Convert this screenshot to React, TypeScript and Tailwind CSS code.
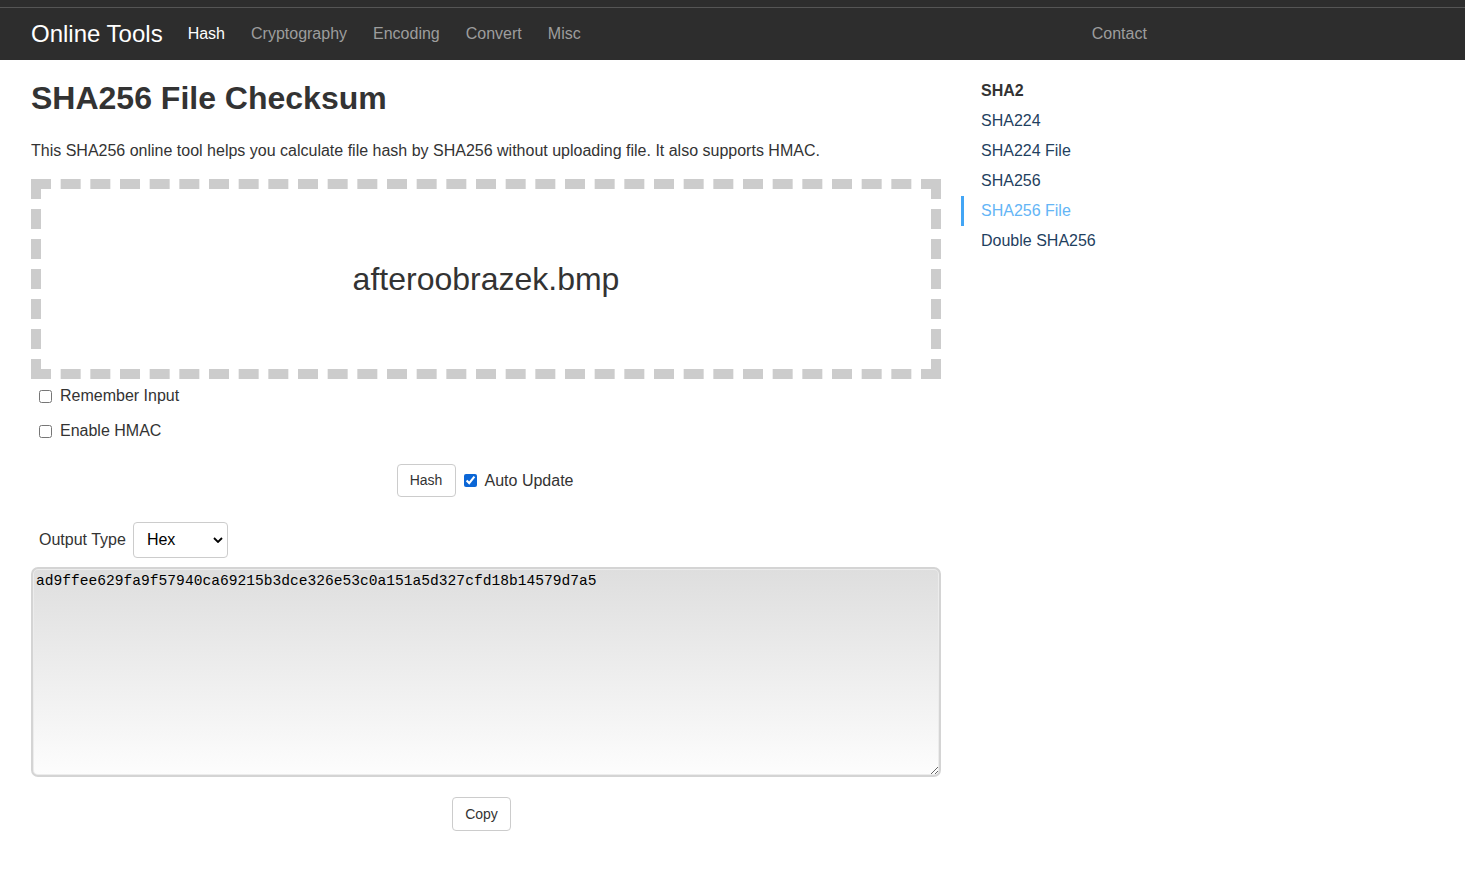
import { useState } from "react";

const NAV_ITEMS = ["Hash", "Cryptography", "Encoding", "Convert", "Misc"];
const SIDE_ITEMS = ["SHA224", "SHA224 File", "SHA256", "SHA256 File", "Double SHA256"];
const HASH = "ad9ffee629fa9f57940ca69215b3dce326e53c0a151a5d327cfd18b14579d7a5";

const App = () => {
  const [remember, setRemember] = useState(false);
  const [hmac, setHmac] = useState(false);
  const [auto, setAuto] = useState(true);

  return (
    <div
      className="min-h-screen bg-white text-[#333]"
      style={{ fontFamily: '"Liberation Sans", Arial, sans-serif' }}
    >
      <header className="bg-[#2d2d2d]">
        <div className="h-[7px]" />
        <nav className="h-[53px] border-t border-[#555] flex flex-row items-center pl-[31px]">
          <a href="#" className="text-white text-[24px] mr-[25px] leading-none">
            Online Tools
          </a>
          <ul className="flex flex-row items-center gap-[26px] text-[16px]">
            {NAV_ITEMS.map((item, i) => (
              <li key={item} className={i === 0 ? "text-white" : "text-[#9d9d9d]"}>
                {item}
              </li>
            ))}
          </ul>
          <span className="ml-[511px] text-[16px] text-[#9d9d9d]">Contact</span>
        </nav>
      </header>

      <div className="flex flex-row pl-[31px] gap-[20px]">
        <main className="w-[910px]">
          <h1 className="text-[32px] font-bold leading-none mt-[22px] mb-[27px]">
            SHA256 File Checksum
          </h1>
          <p className="text-[16px] leading-[20px] mb-[18px]">
            This SHA256 online tool helps you calculate file hash by SHA256 without uploading file.
            It also supports HMAC.
          </p>

          <div className="h-[200px] border-[10px] border-dashed border-[#ccc] flex items-center justify-center">
            <span className="text-[32px]">afteroobrazek.bmp</span>
          </div>

          <div className="pl-[8px] pt-[7px]">
            <label className="flex flex-row items-center h-[20px] text-[16px]">
              <input
                type="checkbox"
                checked={remember}
                onChange={(e) => setRemember(e.target.checked)}
                className="w-[13px] h-[13px] mr-[8px] ml-0"
              />
              Remember Input
            </label>
            <label className="flex flex-row items-center h-[20px] mt-[15px] text-[16px]">
              <input
                type="checkbox"
                checked={hmac}
                onChange={(e) => setHmac(e.target.checked)}
                className="w-[13px] h-[13px] mr-[8px] ml-0"
              />
              Enable HMAC
            </label>
          </div>

          <div className="flex flex-row justify-center items-center mt-[23px] pr-[2px]">
            <button
              type="button"
              className="w-[59px] h-[33px] border border-[#ccc] rounded-[4px] text-[14px] bg-white"
            >
              Hash
            </button>
            <label className="flex flex-row items-center ml-[8px] text-[16px]">
              <input
                type="checkbox"
                checked={auto}
                onChange={(e) => setAuto(e.target.checked)}
                className="w-[13px] h-[13px] mr-[8px] accent-[#0b66d6]"
              />
              Auto Update
            </label>
          </div>

          <div className="flex flex-row items-center mt-[25px] pl-[8px]">
            <span className="text-[16px] mr-[7px]">Output Type</span>
            <div className="relative w-[95px] h-[36px]">
              <select className="w-full h-full appearance-none border border-[#ccc] rounded-[4px] pl-[13px] text-[16px] bg-white text-black">
                <option>Hex</option>
                <option>Base64</option>
              </select>
              <svg
                viewBox="0 0 10 6"
                className="absolute right-[5px] top-[15px] w-[10px] h-[6px] pointer-events-none"
              >
                <path d="M1 1 L5 5 L9 1" stroke="#000" strokeWidth="1.8" fill="none" />
              </svg>
            </div>
          </div>

          <textarea
            readOnly
            value={HASH}
            className="block w-full h-[210px] mt-[9px] border-2 border-[#d4d4d4] rounded-[7px] px-[3px] pt-[3px] pb-[5px] text-[14.6px] leading-[18px] text-black bg-gradient-to-b from-[#dedede] to-[#fdfdfd] resize-y outline-none shadow-[inset_0_0_0_1px_#ececec]"
            style={{ fontFamily: '"Liberation Mono", "DejaVu Sans Mono", monospace' }}
          />

          <div className="flex flex-row justify-center mt-[20px] pr-[9px]">
            <button
              type="button"
              className="w-[59px] h-[34px] border border-[#ccc] rounded-[4px] text-[14px] bg-white"
            >
              Copy
            </button>
          </div>
        </main>

        <aside className="pt-[16px]">
          <div className="font-bold text-[16px] h-[30px] flex items-center pl-[20px]">SHA2</div>
          <ul>
            {SIDE_ITEMS.map((item) => {
              const active = item === "SHA256 File";
              return (
                <li
                  key={item}
                  className={`h-[30px] flex items-center text-[16px] pl-[17px] border-l-[3px] ${
                    active ? "border-[#42a5f5] text-[#64b5f6]" : "border-transparent text-[#1f3f60]"
                  }`}
                >
                  {item}
                </li>
              );
            })}
          </ul>
        </aside>
      </div>
    </div>
  );
};

export default App;
